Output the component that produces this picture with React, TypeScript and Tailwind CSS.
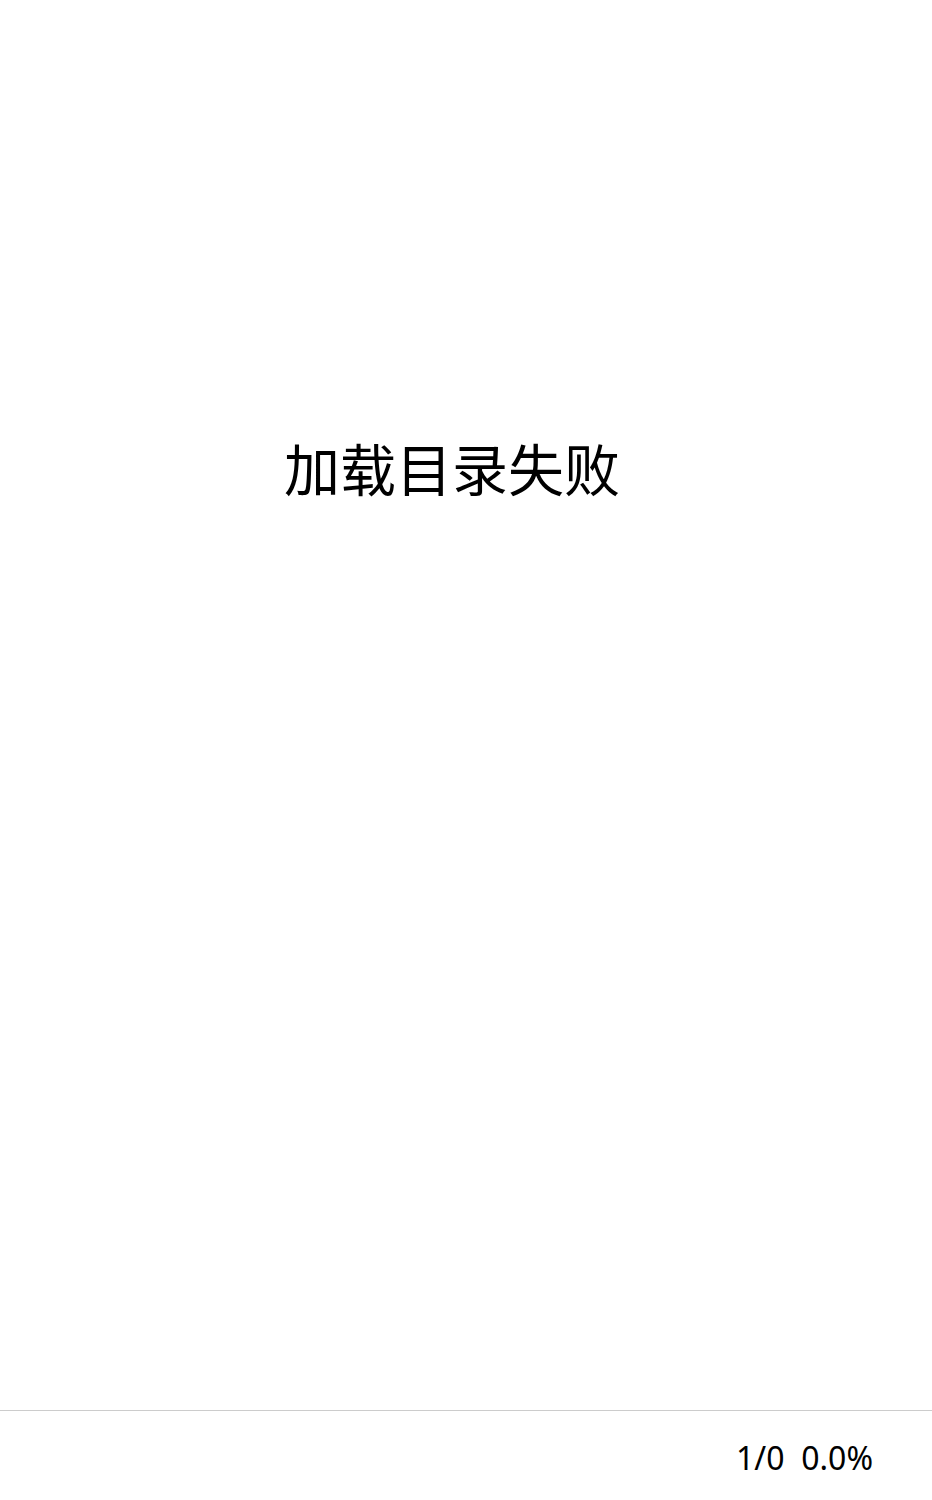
import React from 'react';

const App: React.FC = () => {
  return (
    <div className="flex h-[1500px] w-[932px] flex-col bg-white text-black" style={{ fontFamily: '"Noto Sans", "Noto Sans CJK SC", sans-serif' }}>
      <main className="flex flex-1 justify-center pr-[28px] pt-[437px]">
        <p className="text-[56px] leading-[60px]" style={{ fontFamily: '"Noto Sans CJK SC", sans-serif' }}>
          加载目录失败
        </p>
      </main>
      <footer className="flex h-[90px] items-center justify-end border-t border-[#cccccc] pr-[59px] pt-[4px]">
        <span className="whitespace-pre text-[32px] leading-none">1/0  0.0%</span>
      </footer>
    </div>
  );
};

export default App;
